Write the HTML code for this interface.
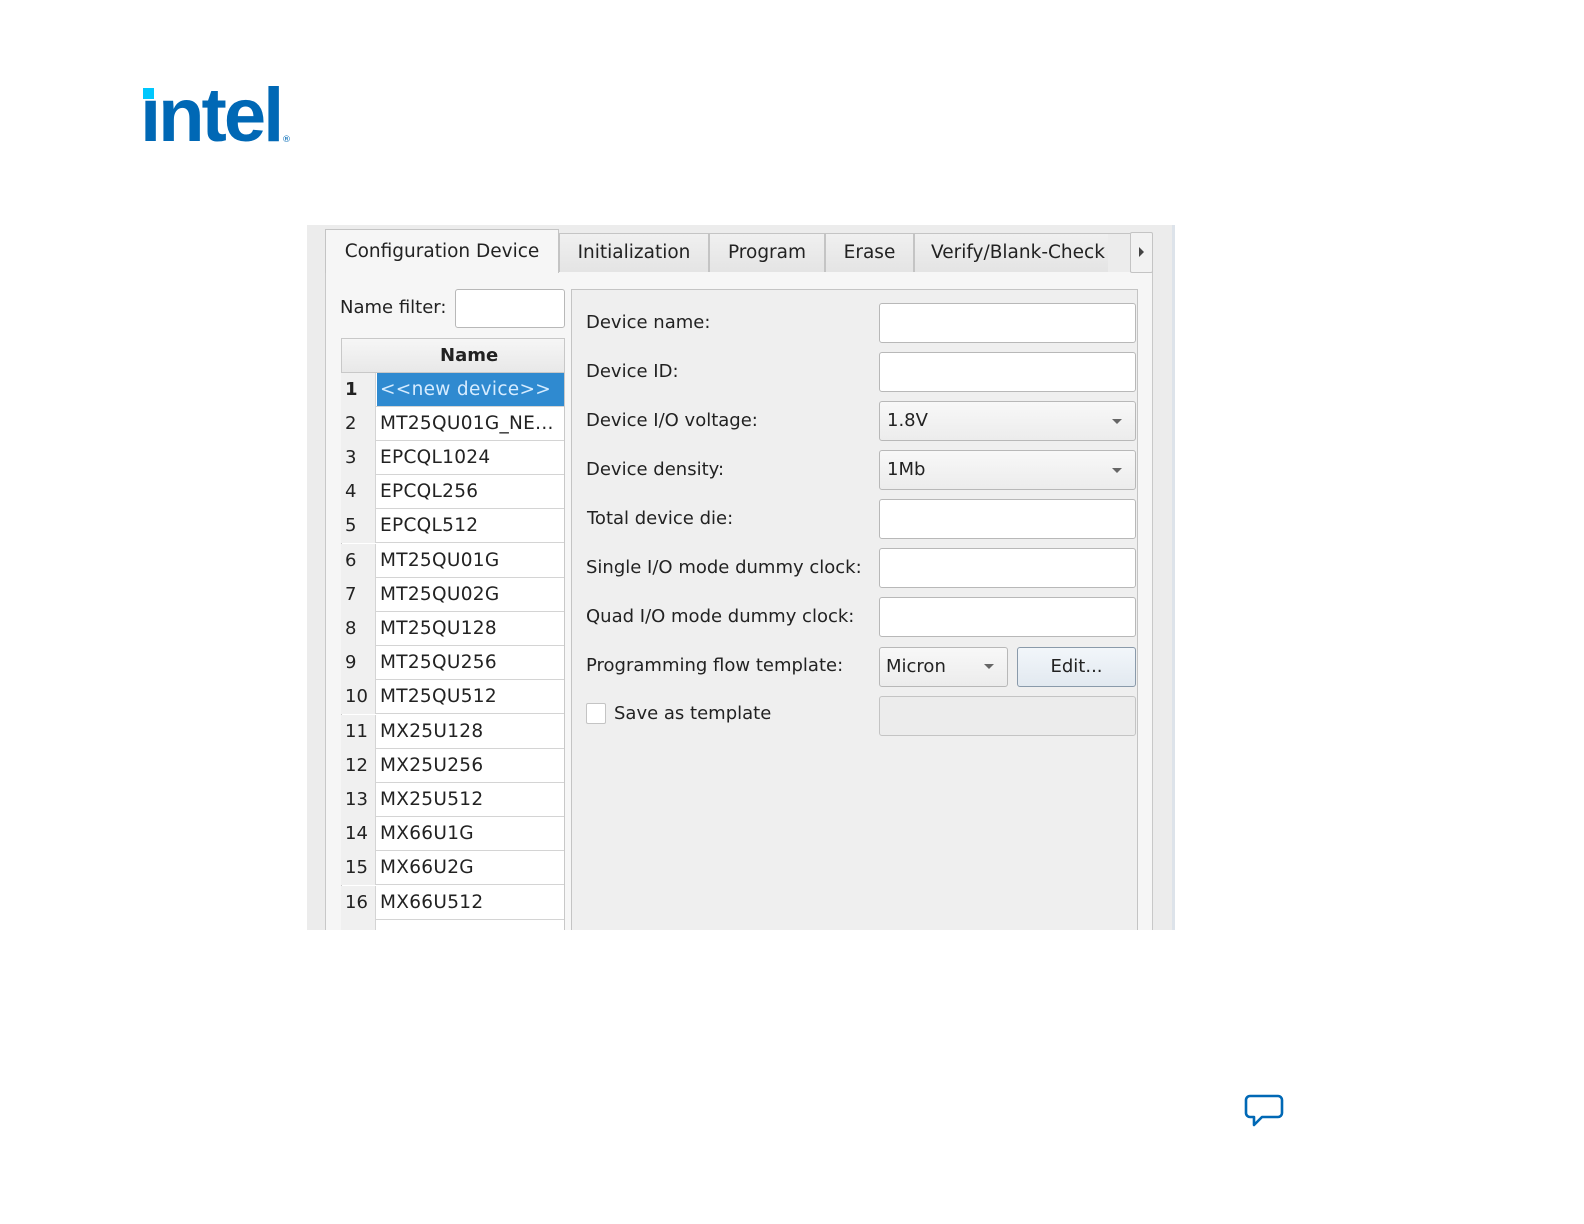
<!DOCTYPE html>
<html><head><meta charset="utf-8"><style>
*{margin:0;padding:0;box-sizing:border-box}
body{width:1584px;height:1224px;background:#fff;position:relative;overflow:hidden;font-family:"DejaVu Sans","Liberation Sans",sans-serif;color:#222}
.a{position:absolute}
.t{position:absolute;font-size:18px;white-space:nowrap;line-height:22px}
.f{position:absolute;background:#fff;border:1px solid #b8b8b8;border-radius:3px}
.cb{position:absolute;background:linear-gradient(#f8f8f8,#ececec);border:1px solid #b8b8b8;border-radius:3px}
.arr{position:absolute;width:0;height:0;border-left:5px solid transparent;border-right:5px solid transparent;border-top:5px solid #666}
.tab{position:absolute;top:233px;height:39px;background:linear-gradient(#f0f0f0,#e4e4e4);border:1px solid #c4c4c4;border-bottom:none;font-size:18.5px;line-height:38px;text-align:center;color:#222}
.row{position:absolute;left:341px;width:223px;height:34px;border-bottom:1px solid #d4d4d4}
.row .n{position:absolute;left:0;top:0;width:35px;height:34px;background:#f0f0f0;border-right:1px solid #d4d4d4;font-size:18px;line-height:34px;padding-left:4px}
.row .v{position:absolute;left:39px;top:0;font-size:18.5px;line-height:34px;letter-spacing:.3px}
</style></head><body>
<div class="a" style="left:140px;top:78px;font-family:'Liberation Sans',sans-serif;font-size:76px;font-weight:bold;color:#0068b5;letter-spacing:-3px;line-height:76px">ıntel</div>
<div class="a" style="left:143px;top:88px;width:11px;height:11px;background:#00c7fd"></div>
<div class="a" style="left:282px;top:135px;font-size:9px;color:#0068b5">®</div>

<div class="a" style="left:307px;top:225px;width:868px;height:705px;background:#ececec;border-right:3px solid #dde3ea"></div>
<div class="a" style="left:325px;top:271px;width:828px;height:659px;background:#f6f6f6;border:1px solid #c8c8c8;border-bottom:none"></div>
<div class="tab" style="left:325px;top:229px;width:234px;height:44px;background:#f6f6f6;line-height:44px;z-index:2">Configuration Device</div>
<div class="tab" style="left:559px;width:150px">Initialization</div>
<div class="tab" style="left:709px;width:116px">Program</div>
<div class="tab" style="left:825px;width:89px">Erase</div>
<div class="tab" style="left:914px;width:216px;text-align:left;padding-left:16px;overflow:hidden">Verify/Blank-Check</div>
<div class="a" style="left:1108px;top:234px;width:22px;height:38px;background:#ececec"></div>
<div class="a" style="left:1130px;top:232px;width:23px;height:41px;background:#f2f2f2;border:1px solid #c4c4c4;border-radius:2px"></div>
<div class="a" style="left:1139px;top:247px;border-top:5px solid transparent;border-bottom:5px solid transparent;border-left:5px solid #444"></div>

<div class="t" style="left:340px;top:297px">Name filter:</div>
<div class="f" style="left:455px;top:289px;width:110px;height:39px"></div>

<div class="a" style="left:341px;top:338px;width:224px;height:592px;background:#fff;border:1px solid #c8c8c8;border-bottom:none"></div>
<div class="a" style="left:342px;top:339px;width:222px;height:34px;background:linear-gradient(#f6f6f6,#e8e8e8);border-bottom:1px solid #c8c8c8;font-weight:bold;font-size:18px;line-height:34px;padding-left:98px">Name</div>
<div class="row" style="top:373px"><div class="n" style="font-weight:bold">1</div><div class="a" style="left:36px;top:0;width:187px;height:33px;background:#2f8ad0"></div><div class="v" style="color:#d6ecff">&lt;&lt;new device&gt;&gt;</div></div>
<div class="row" style="top:407px"><div class="n">2</div><div class="v">MT25QU01G_NE...</div></div>
<div class="row" style="top:441px"><div class="n">3</div><div class="v">EPCQL1024</div></div>
<div class="row" style="top:475px"><div class="n">4</div><div class="v">EPCQL256</div></div>
<div class="row" style="top:509px"><div class="n">5</div><div class="v">EPCQL512</div></div>
<div class="row" style="top:544px"><div class="n">6</div><div class="v">MT25QU01G</div></div>
<div class="row" style="top:578px"><div class="n">7</div><div class="v">MT25QU02G</div></div>
<div class="row" style="top:612px"><div class="n">8</div><div class="v">MT25QU128</div></div>
<div class="row" style="top:646px"><div class="n">9</div><div class="v">MT25QU256</div></div>
<div class="row" style="top:680px"><div class="n">10</div><div class="v">MT25QU512</div></div>
<div class="row" style="top:715px"><div class="n">11</div><div class="v">MX25U128</div></div>
<div class="row" style="top:749px"><div class="n">12</div><div class="v">MX25U256</div></div>
<div class="row" style="top:783px"><div class="n">13</div><div class="v">MX25U512</div></div>
<div class="row" style="top:817px"><div class="n">14</div><div class="v">MX66U1G</div></div>
<div class="row" style="top:851px"><div class="n">15</div><div class="v">MX66U2G</div></div>
<div class="row" style="top:886px"><div class="n">16</div><div class="v">MX66U512</div></div>
<div class="row" style="top:920px;border:none"><div class="n" style="height:10px"></div></div>

<div class="a" style="left:571px;top:289px;width:567px;height:641px;background:#efefef;border:1px solid #c4c4c4;border-bottom:none"></div>
<div class="t" style="left:586px;top:312px">Device name:</div>
<div class="t" style="left:586px;top:361px">Device ID:</div>
<div class="t" style="left:586px;top:410px">Device I/O voltage:</div>
<div class="t" style="left:586px;top:459px">Device density:</div>
<div class="t" style="left:587px;top:508px">Total device die:</div>
<div class="t" style="left:586px;top:557px">Single I/O mode dummy clock:</div>
<div class="t" style="left:586px;top:606px">Quad I/O mode dummy clock:</div>
<div class="t" style="left:586px;top:655px">Programming flow template:</div>
<div class="a" style="left:586px;top:703px;width:20px;height:21px;background:#fff;border:1px solid #c4c4c4;border-radius:2px"></div>
<div class="t" style="left:614px;top:703px">Save as template</div>

<div class="f" style="left:879px;top:303px;width:257px;height:40px"></div>
<div class="f" style="left:879px;top:352px;width:257px;height:40px"></div>
<div class="cb" style="left:879px;top:401px;width:257px;height:40px"><span class="t" style="left:7px;top:8px">1.8V</span><div class="arr" style="left:232px;top:17px"></div></div>
<div class="cb" style="left:879px;top:450px;width:257px;height:40px"><span class="t" style="left:7px;top:8px">1Mb</span><div class="arr" style="left:232px;top:17px"></div></div>
<div class="f" style="left:879px;top:499px;width:257px;height:40px"></div>
<div class="f" style="left:879px;top:548px;width:257px;height:40px"></div>
<div class="f" style="left:879px;top:597px;width:257px;height:40px"></div>
<div class="cb" style="left:879px;top:647px;width:129px;height:40px"><span class="t" style="left:6px;top:8px">Micron</span><div class="arr" style="left:104px;top:16px"></div></div>
<div class="a" style="left:1017px;top:647px;width:119px;height:40px;background:linear-gradient(#f2f6fa,#e2e9f0);border:1px solid #8a9aaa;border-radius:3px;font-size:18px;line-height:38px;text-align:center">Edit...</div>
<div class="a" style="left:879px;top:696px;width:257px;height:40px;background:#ececec;border:1px solid #c4c4c4;border-radius:3px"></div>

<svg class="a" style="left:1243px;top:1093px" width="42" height="36" viewBox="0 0 42 36"><path d="M7 3h28a4 4 0 0 1 4 4v13a4 4 0 0 1-4 4H19l-8 8v-8H7a4 4 0 0 1-4-4V7a4 4 0 0 1 4-4z" fill="none" stroke="#0068b5" stroke-width="2.6" stroke-linejoin="round"/></svg>
</body></html>
